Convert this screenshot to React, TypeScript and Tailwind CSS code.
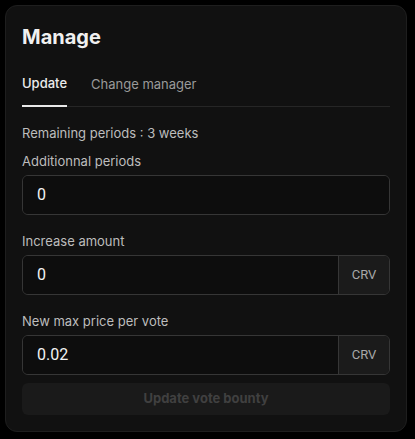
import React from 'react';

function AmountField({ label, value, unit }: { label: string; value: string; unit?: string }) {
  return (
    <div className="flex flex-col gap-1">
      <label className="text-[13px] leading-5 text-[#bdbdbd]">{label}</label>
      <div className="flex h-10 rounded-md border border-[#363636] overflow-hidden">
        <input
          readOnly
          value={value}
          className="flex-1 min-w-0 bg-[#0d0d0d] px-[14px] text-[16px] text-[#f2f2f2] outline-none font-['Roboto',sans-serif]"
        />
        {unit && (
          <div className="w-[51px] shrink-0 flex items-center justify-center border-l border-[#363636] bg-[#1b1b1b] text-[13px] text-[#a8a8a8] font-['Roboto',sans-serif]">
            {unit}
          </div>
        )}
      </div>
    </div>
  );
}

export default function App() {
  return (
    <div className="min-h-screen bg-black p-[5px] font-['Inter',sans-serif]">
      <div className="w-[402px] rounded-xl border border-[#1e1e1e] bg-[#111111] px-4 pt-[17px] pb-4">
        <h2 className="text-[20px] leading-7 font-bold text-[#f0f0f0]">Manage</h2>

        {/* Tabs */}
        <div className="mt-[22px] flex gap-6 border-b border-[#262626]">
          <button className="pb-3 -mb-px border-b-2 border-[#e8e8e8] text-[13px] leading-5 font-medium text-[#ececec]">
            Update
          </button>
          <button className="pb-3 text-[13px] leading-5 text-[#9a9a9a]">Change manager</button>
        </div>

        <p className="mt-4 text-[13px] leading-5 text-[#bdbdbd]">Remaining periods : 3 weeks</p>

        <div className="mt-2 flex flex-col gap-4">
          <AmountField label="Additionnal periods" value="0" />
          <AmountField label="Increase amount" value="0" unit="CRV" />
          <AmountField label="New max price per vote" value="0.02" unit="CRV" />
        </div>

        <button
          disabled
          className="mt-2 w-full h-8 rounded-md bg-[#1a1a1a] text-[13px] font-bold text-[#404040]"
        >
          Update vote bounty
        </button>
      </div>
    </div>
  );
}
